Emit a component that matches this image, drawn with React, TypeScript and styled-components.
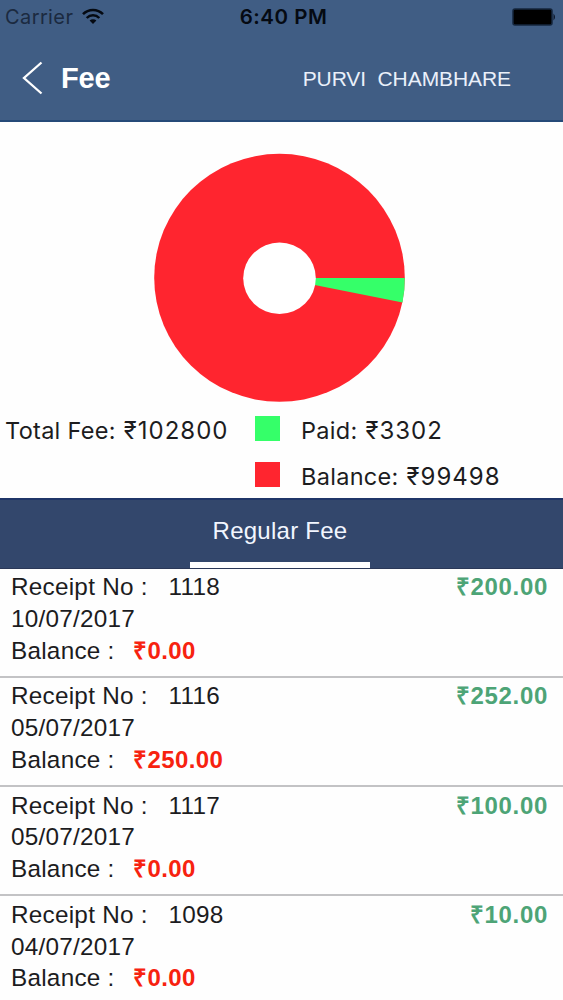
import React from "react";
import styled, { createGlobalStyle } from "styled-components";

const GlobalStyle = createGlobalStyle`
  * { box-sizing: border-box; }
  body { margin: 0; background: #fefefe; overflow: hidden; }
`;

const Screen = styled.main`
  width: 563px;
  height: 1000px;
  overflow: hidden;
  display: flex;
  flex-direction: column;
  background: #fefefe;
  color: #1c1c1e;
  font-family: "Liberation Sans", Arial, sans-serif;
  white-space: pre;
`;

const Header = styled.header`
  height: 122px;
  flex: none;
  background: #405d84;
  border-bottom: 2px solid #254a78;
`;

const StatusBar = styled.div`
  height: 33px;
  display: grid;
  grid-template-columns: 1fr auto 1fr;
  align-items: center;
  padding: 0 6px 0 5px;
  font-family: Inter, sans-serif;
  color: #050a12;
`;

const Carrier = styled.div`
  display: flex;
  align-items: center;
  gap: 9px;
  font-size: 20px;
  letter-spacing: 0.4px;
  color: #1b2a40;
`;

const Clock = styled.div`
  padding-left: 5px;
  font-size: 20.5px;
  font-weight: 600;
  letter-spacing: 0.5px;
`;

const Battery = styled.svg`
  justify-self: end;
`;

const NavBar = styled.nav`
  height: 89px;
  display: flex;
  align-items: center;
  padding: 1px 52px 0 22px;
  color: #fff;
`;

const Title = styled.h1`
  flex: 1;
  margin: 0 0 0 18px;
  font-size: 29px;
  font-weight: 700;
  letter-spacing: -0.2px;
`;

const Student = styled.div`
  padding-top: 1px;
  font-size: 21px;
  letter-spacing: -0.08px;
  color: #eaf0fa;
`;

const Summary = styled.section`
  height: 376px;
  flex: none;
  display: flex;
  flex-direction: column;
  padding-top: 31px;
  font-family: Inter, sans-serif;
`;

const Donut = styled.svg`
  display: block;
  flex: none;
  margin-left: 153px;
`;

const Legend = styled.div`
  display: grid;
  grid-template-columns: 250px 1fr;
  padding: 3px 0 0 5px;
`;

const LegendList = styled.div`
  display: flex;
  flex-direction: column;
`;

const LegendText = styled.div`
  padding-top: 2px;
  font-size: 23.5px;
  line-height: 46px;
  letter-spacing: 0.3px;
`;

const Figure = styled.span`
  margin-left: 1px;
  font-size: 24px;
  letter-spacing: 1px;
`;

const LegendItem = styled.div`
  display: flex;
  height: 46px;
  gap: 21px;
`;

const Swatch = styled.span<{ $color: string }>`
  width: 25px;
  height: 25px;
  margin-top: 10px;
  background: ${(p) => p.$color};
`;

const TabBar = styled.div`
  height: 71px;
  flex: none;
  display: flex;
  justify-content: center;
  background: #33476c;
  border-top: 2px solid #1f3568;
  border-bottom: 1px solid #2b3858;
`;

const Tab = styled.div`
  width: 180px;
  margin-right: 3px;
  display: flex;
  justify-content: center;
  padding-top: 17px;
  font-size: 24px;
  line-height: 28px;
  letter-spacing: 0.25px;
  color: #f2f6ff;
  border-bottom: 6px solid #fff;
`;

const ReceiptList = styled.section`
  display: flex;
  flex-direction: column;
  margin-top: -2.5px;
`;

const Receipt = styled.article`
  height: 109.3px;
  flex: none;
  display: flex;
  justify-content: space-between;
  padding: 4.5px 15px 0 11px;
  font-size: 24.3px;
  line-height: 31.8px;
  & + & {
    border-top: 2px solid #c3c3c5;
    padding-top: 2.5px;
  }
`;

const Line = styled.div`
  display: flex;
  letter-spacing: 0.25px;
`;

const Label = styled.span<{ $width: number }>`
  width: ${(p) => p.$width}px;
`;

const Balance = styled.strong`
  color: #f7220f;
  letter-spacing: 0.4px;
  font-size: 24px;
`;

const Amount = styled.strong`
  color: #4da476;
  letter-spacing: 0.7px;
  font-size: 24px;
`;

const receipts = [
  { no: "1118", date: "10/07/2017", balance: "₹0.00", amount: "₹200.00" },
  { no: "1116", date: "05/07/2017", balance: "₹250.00", amount: "₹252.00" },
  { no: "1117", date: "05/07/2017", balance: "₹0.00", amount: "₹100.00" },
  { no: "1098", date: "04/07/2017", balance: "₹0.00", amount: "₹10.00" },
];

export default function App() {
  return (
    <Screen>
      <GlobalStyle />
      <Header>
        <StatusBar>
          <Carrier>
            Carrier
            <svg width="22" height="17" viewBox="0 0 22 17" fill="none" stroke="#050a12" strokeWidth="2.5">
              <path d="M1 6.2C6.5.5 15.5.5 21 6.2" />
              <path d="M4.7 10C8.3 6.3 13.7 6.3 17.3 10" />
              <path d="M11 16L7.6 12.6C9.5 10.9 12.5 10.9 14.4 12.6Z" fill="#050a12" stroke="none" />
            </svg>
          </Carrier>
          <Clock>6:40 PM</Clock>
          <Battery width="45" height="18" viewBox="0 0 45 18">
            <rect x="1" y="1" width="39" height="16" rx="2" fill="#000" stroke="#14263d" strokeWidth="1.5" />
            <path d="M41.5 5.5Q44.5 9 41.5 12.5Z" fill="#0b1728" />
          </Battery>
        </StatusBar>
        <NavBar>
          <svg width="21" height="34" viewBox="0 0 21 34" fill="none" stroke="#fff" strokeWidth="2.3">
            <path d="M19.5 1.5L2 17L19.5 32.5" />
          </svg>
          <Title>Fee</Title>
          <Student>PURVI  CHAMBHARE</Student>
        </NavBar>
      </Header>
      <Summary>
        <Donut width="253" height="250" viewBox="0 0 253 250">
          <ellipse cx="126.5" cy="124.8" rx="125.3" ry="124" fill="#ff252f" />
          <path d="M126.5 125L251.8 125Q252 137 249.5 149.5Z" fill="#35ff69" />
          <ellipse cx="126.5" cy="125.2" rx="36.3" ry="35.8" fill="#fff" />
        </Donut>
        <Legend>
          <LegendText>
            Total Fee: <Figure>₹102800</Figure>
          </LegendText>
          <LegendList>
            <LegendItem>
              <Swatch $color="#35ff69" />
              <LegendText>
                Paid: <Figure>₹3302</Figure>
              </LegendText>
            </LegendItem>
            <LegendItem>
              <Swatch $color="#ff252f" />
              <LegendText>
                Balance: <Figure>₹99498</Figure>
              </LegendText>
            </LegendItem>
          </LegendList>
        </Legend>
      </Summary>
      <TabBar>
        <Tab>Regular Fee</Tab>
      </TabBar>
      <ReceiptList>
        {receipts.map((r) => (
          <Receipt key={r.no}>
            <div>
              <Line>
                <Label $width={157.5}>Receipt No :</Label>
                {r.no}
              </Line>
              <Line>{r.date}</Line>
              <Line>
                <Label $width={122}>Balance :</Label>
                <Balance>{r.balance}</Balance>
              </Line>
            </div>
            <Amount>{r.amount}</Amount>
          </Receipt>
        ))}
      </ReceiptList>
    </Screen>
  );
}
